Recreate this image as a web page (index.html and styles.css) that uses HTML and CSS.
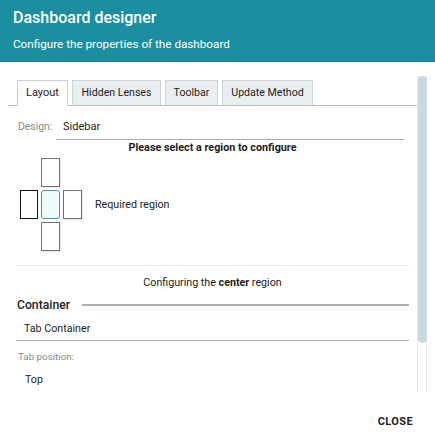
FILE: index.html
```html
<!DOCTYPE html>
<html lang="en">
<head>
    <meta charset="UTF-8">
    <title>Dashboard designer</title>
    <link rel="stylesheet" href="styles.css">
</head>
<body>
    <div class="dialog">
        <div class="header">
            <h1>Dashboard designer</h1>
            <p>Configure the properties of the dashboard</p>
        </div>

        <div class="content">
            <div class="scroll-area">
                <div class="tabs">
                    <div class="tab active">Layout</div>
                    <div class="tab">Hidden Lenses</div>
                    <div class="tab">Toolbar</div>
                    <div class="tab">Update Method</div>
                </div>

                <div class="pane">
                    <div class="design-row">
                        <span class="label">Design:</span>
                        <span class="value">Sidebar</span>
                    </div>

                    <div class="prompt">Please select a region to configure</div>

                    <div class="regions">
                        <div class="picker">
                            <div class="region top"></div>
                            <div class="region left"></div>
                            <div class="region center"></div>
                            <div class="region right"></div>
                            <div class="region bottom"></div>
                        </div>
                        <span class="required">Required region</span>
                    </div>

                    <div class="configuring">Configuring the <b>center</b> region</div>

                    <div class="section-title">Container</div>
                    <div class="field">Tab Container</div>

                    <div class="field-label">Tab position:</div>
                    <div class="field plain">Top</div>
                </div>
            </div>
            <div class="scrollbar">
                <div class="thumb"></div>
            </div>
        </div>

        <div class="actions">
            <button>Close</button>
        </div>
    </div>
</body>
</html>
```

FILE: styles.css
```css
* {
    box-sizing: border-box;
    margin: 0;
    padding: 0;
}

body {
    font-family: Roboto, "Liberation Sans", sans-serif;
    background-color: white;
    color: #222;
}

.dialog {
    width: 435px;
    height: 435px;
    display: flex;
    flex-direction: column;
}

.header {
    background-color: #1b8fa0;
    color: white;
    height: 62px;
    padding: 8px 13px 0;
    border-bottom: 1px solid #15808f;
}

.header h1 {
    font-size: 16px;
    font-weight: 500;
    line-height: 20px;
}

.header p {
    font-size: 11.7px;
    line-height: 16px;
    margin-top: 8px;
}

.content {
    display: flex;
    margin: 14px 8px 0;
    height: 316px;
}

.scroll-area {
    flex: 1;
    overflow: hidden;
}

.scrollbar {
    width: 10px;
    border-left: 1px solid #e6e6e6;
    border-right: 1px solid #e6e6e6;
}

.thumb {
    height: 267px;
    margin: 0 -1px 0 0;
    background-color: #cdd8de;
    border-radius: 4px 4px 5px 5px;
}

.tabs {
    display: flex;
    gap: 4px;
    margin-top: 4px;
    padding-left: 9px;
    border-bottom: 1px solid #b4c0c6;
}

.tab {
    height: 25px;
    line-height: 24px;
    text-align: center;
    font-size: 10.6px;
    background-color: #e9eef1;
    border: 1px solid #cfd6da;
    border-bottom: none;
    margin-bottom: -1px;
}

.tab:nth-child(1) { width: 51px; }
.tab:nth-child(2) { width: 89px; }
.tab:nth-child(3) { width: 53px; }
.tab:nth-child(4) { width: 91px; }

.tab.active {
    background-color: white;
    border-color: #c8d0d4;
    height: 26px;
    font-size: 11px;
}

.pane {
    padding: 0 8px;
}

.design-row {
    display: flex;
    align-items: flex-start;
    margin-top: 14px;
}

.label {
    font-size: 10.4px;
    line-height: 14px;
    color: #8a8a8a;
    width: 40px;
    padding-left: 2px;
}

.value {
    flex: 1;
    font-size: 11px;
    line-height: 14px;
    padding: 0 7px 5px;
    margin-right: 5px;
    border-bottom: 1px solid #aaa;
}

.prompt {
    text-align: center;
    font-size: 10.8px;
    line-height: 14px;
    font-weight: bold;
    margin-top: 1px;
}

.regions {
    display: flex;
    align-items: center;
    gap: 13px;
    margin-top: 3px;
    padding-bottom: 14px;
    border-bottom: 1px solid #e2e2e2;
}

.picker {
    display: grid;
    grid-template-columns: 18px 19px 19px;
    grid-template-rows: 29px 29px 29px;
    gap: 3px;
    margin-left: 4px;
}

.region {
    border: 1px solid #6f6f6f;
    box-shadow: 1px 1px 0 rgba(0, 0, 0, 0.08);
}

.top { grid-column: 2; grid-row: 1; }
.left { grid-column: 1; grid-row: 2; border-color: #111; box-shadow: none; }
.center {
    grid-column: 2;
    grid-row: 2;
    border-color: #3b9a9a;
    background-color: #f0fcfc;
    border-radius: 3px;
    box-shadow: none;
}
.right { grid-column: 3; grid-row: 2; }
.bottom { grid-column: 2; grid-row: 3; }

.required {
    font-size: 10.7px;
}

.configuring {
    text-align: center;
    font-size: 10.7px;
    line-height: 14px;
    margin-top: 10px;
}

.section-title {
    display: flex;
    align-items: center;
    gap: 12px;
    font-size: 12.2px;
    line-height: 16px;
    font-weight: 500;
    margin-top: 7px;
    padding-left: 1px;
}

.section-title::after {
    content: "";
    flex: 1;
    border-top: 2px solid #a7afb4;
}

.field {
    font-size: 10.7px;
    line-height: 14px;
    padding: 9px 8px 4px;
    border-bottom: 1px solid #aaa;
}

.field-label {
    font-size: 9.8px;
    line-height: 12px;
    color: #8a8a8a;
    margin-top: 10px;
    padding-left: 2px;
}

.field.plain {
    border-bottom: none;
    padding-top: 10px;
    padding-left: 9px;
}

.actions {
    flex: 1;
    display: flex;
    justify-content: flex-end;
    align-items: center;
    padding: 0 22px 0 0;
}

button {
    font-family: Roboto, "Liberation Sans", sans-serif;
    font-size: 11px;
    font-weight: bold;
    text-transform: uppercase;
    letter-spacing: 0.4px;
    background: none;
    border: none;
    color: #222;
    margin-top: 16px;
}
```
